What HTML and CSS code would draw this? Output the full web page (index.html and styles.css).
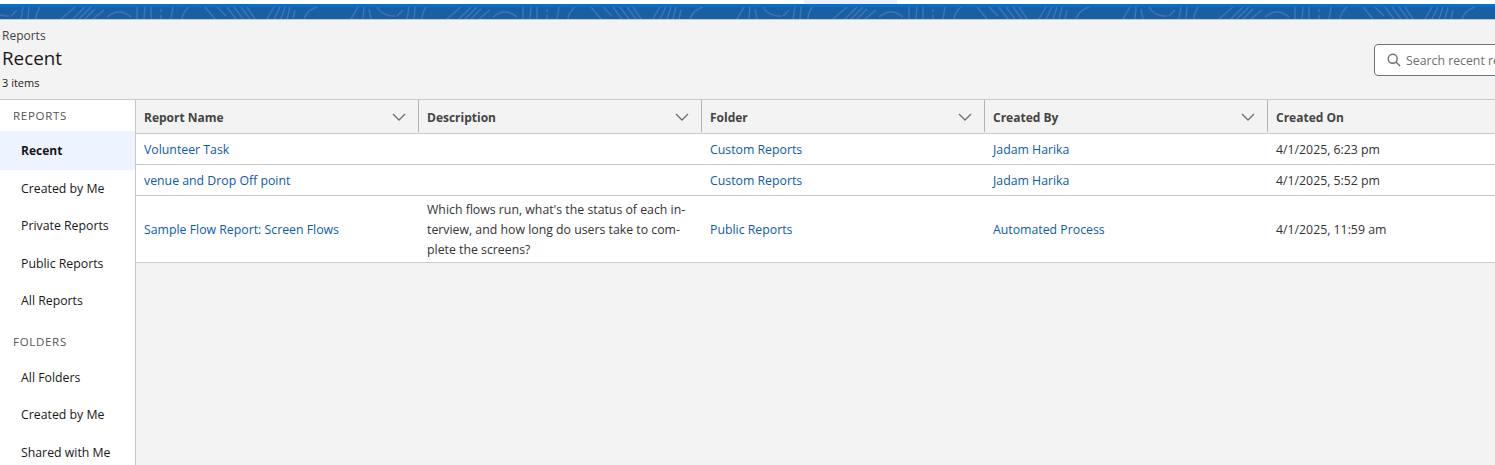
FILE: index.html
```html
<!DOCTYPE html>
<html>
<head>
    <meta charset="utf-8">
    <link rel="stylesheet" href="styles.css">
</head>
<body>
    <div class="tabs-strip">
        <div class="tab-active"></div>
    </div>
    <div class="brand-line"></div>
    <svg class="brand-band" width="100%" height="12">
        <defs>
            <pattern id="swirl" patternUnits="userSpaceOnUse" x="19" y="0" width="386" height="12">
                <g fill="none" stroke="#3f76b1" stroke-width="1.4">
                    <path d="M2 12L4 0M9 12L10 0M17 12Q17 6 21 0"/>
                    <path d="M42 12L56 0M54 12L66 0M60 12L72 0M66 12L76 2M74 12L85 3"/>
                    <path d="M88 10Q100 0 112 10"/>
                    <path d="M118 12L118 0M125 12L126 0M132 12L132 0M142 12L142 8M142 5L142 2M152 12L154 0M163 12Q164 5 170 0"/>
                    <path d="M186 0L196 12M198 0L207 9M208 0L217 12M215 0L224 12M222 0L231 12M228 0L236 12"/>
                    <path d="M248 12L255 0M255 12L261 0M262 12L266 0M268 12L271 0M274 12L276 3"/>
                    <path d="M285 12Q288 3 298 0"/>
                    <path d="M332 12L339 0M344 12L345 0M352 12L350 2M358 0Q364 10 376 9M378 9L384 3"/>
                </g>
            </pattern>
        </defs>
        <rect width="100%" height="12" fill="#1b5fa3"/>
        <rect width="100%" height="12" fill="url(#swirl)"/>
    </svg>

    <header class="page-head">
        <div class="head-titles">
            <div class="crumb">Reports</div>
            <h1 class="page-title">Recent</h1>
            <div class="item-count">3 items</div>
        </div>
        <div class="search-box">
            <svg class="search-icon" width="14" height="14" viewBox="0 0 14 14">
                <circle cx="5.7" cy="5.7" r="4.5" fill="none" stroke="#706e6b" stroke-width="1.4"/>
                <path d="M9 9L13 13" stroke="#706e6b" stroke-width="1.5" fill="none"/>
            </svg>
            <span class="search-text">Search recent reports...</span>
        </div>
    </header>

    <div class="main">
        <nav class="side">
            <div class="side-label">REPORTS</div>
            <a class="side-item current">Recent</a>
            <a class="side-item">Created by Me</a>
            <a class="side-item">Private Reports</a>
            <a class="side-item">Public Reports</a>
            <a class="side-item">All Reports</a>
            <div class="side-label folders">FOLDERS</div>
            <a class="side-item">All Folders</a>
            <a class="side-item">Created by Me</a>
            <a class="side-item">Shared with Me</a>
        </nav>

        <div class="content">
            <div class="row head-row">
                <div class="th">Report Name<svg class="chev" width="14" height="8" viewBox="0 0 14 8"><path d="M1 1L7 7L13 1"/></svg></div>
                <div class="th">Description<svg class="chev" width="14" height="8" viewBox="0 0 14 8"><path d="M1 1L7 7L13 1"/></svg></div>
                <div class="th">Folder<svg class="chev" width="14" height="8" viewBox="0 0 14 8"><path d="M1 1L7 7L13 1"/></svg></div>
                <div class="th">Created By<svg class="chev" width="14" height="8" viewBox="0 0 14 8"><path d="M1 1L7 7L13 1"/></svg></div>
                <div class="th last">Created On</div>
            </div>
            <div class="row body-row">
                <div class="td"><a>Volunteer Task</a></div>
                <div class="td"></div>
                <div class="td"><a>Custom Reports</a></div>
                <div class="td"><a>Jadam Harika</a></div>
                <div class="td">4/1/2025, 6:23 pm</div>
            </div>
            <div class="row body-row">
                <div class="td"><a>venue and Drop Off point</a></div>
                <div class="td"></div>
                <div class="td"><a>Custom Reports</a></div>
                <div class="td"><a>Jadam Harika</a></div>
                <div class="td">4/1/2025, 5:52 pm</div>
            </div>
            <div class="row body-row tall">
                <div class="td"><a>Sample Flow Report: Screen Flows</a></div>
                <div class="td desc">Which flows run, what's the status of each in-<br>terview, and how long do users take to com-<br>plete the screens?</div>
                <div class="td"><a>Public Reports</a></div>
                <div class="td"><a>Automated Process</a></div>
                <div class="td">4/1/2025, 11:59 am</div>
            </div>
        </div>
    </div>
</body>
</html>
```

FILE: styles.css
```css
html,
body {
    margin: 0;
    height: 465px;
    overflow: hidden;
    background: #f3f3f3;
    font-family: "Open Sans", "Noto Sans", sans-serif;
    font-size: 12.3px;
    color: #2e2e2e;
}

.tabs-strip {
    height: 4px;
    background: #fff;
}

.tab-active {
    width: 93px;
    height: 4px;
    margin-left: 804px;
    background: #eaf1fb;
}

.brand-line {
    height: 3px;
    background: #0070d2;
}

.brand-band {
    display: block;
    height: 12px;
    border-bottom: 1px solid #c9c9c9;
}

.page-head {
    display: flex;
    justify-content: space-between;
    height: 79px;
    border-bottom: 1px solid #c9c9c9;
}

.head-titles {
    padding: 8px 0 0 2px;
}

.crumb {
    font-size: 12px;
    line-height: 16px;
    color: #444;
}

.page-title {
    margin: 1px 0 0;
    font-size: 18.8px;
    line-height: 26px;
    font-weight: 400;
    color: #181818;
}

.item-count {
    margin-top: 4px;
    font-size: 11px;
    line-height: 16px;
    color: #222;
}

.search-box {
    display: flex;
    flex: none;
    align-items: center;
    gap: 5px;
    box-sizing: border-box;
    width: 220px;
    height: 32px;
    margin: 24px -99px 0 0;
    padding-left: 12px;
    background: #fff;
    border: 1px solid #747474;
    border-radius: 4px;
}

.search-text {
    color: #706e6b;
    white-space: nowrap;
}

.main {
    display: flex;
    height: 365px;
}

.side {
    flex: none;
    width: 135px;
    background: #fff;
    border-right: 1px solid #c9c9c9;
}

.side-label {
    height: 31px;
    padding-left: 13px;
    line-height: 31px;
    font-size: 11.5px;
    letter-spacing: 0.7px;
    color: #555;
}

.side-label.folders {
    height: 33px;
    margin-top: 6px;
    line-height: 32px;
}

.side-item {
    display: block;
    height: 37.5px;
    padding-left: 21px;
    line-height: 37px;
    color: #181818;
}

.side-item.current {
    height: 38.5px;
    line-height: 39px;
    font-size: 12px;
    font-weight: 700;
    background: #eef4ff;
}

.content {
    flex: 1;
    min-width: 0;
}

.row {
    display: grid;
    grid-template-columns: repeat(4, 283px) 1fr;
    border-bottom: 1px solid #c9c9c9;
}

.head-row {
    height: 33px;
}

.body-row {
    height: 30px;
    background: #fff;
}

.body-row.tall {
    height: 66px;
}

.th {
    display: flex;
    align-items: center;
    justify-content: space-between;
    margin: 0 0 1px;
    padding: 2px 12px 0 8px;
    font-size: 12px;
    font-weight: 700;
    color: #444;
    border-right: 1px solid #b4b4b4;
}

.th.last {
    border-right: 0;
}

.chev {
    fill: none;
    stroke: #706e6b;
    stroke-width: 1.3;
}

.td {
    display: flex;
    align-items: center;
    padding: 0 8px;
    color: #333;
}

.td a {
    color: #0b5cab;
}

.td.desc {
    display: block;
    padding-top: 4px;
    line-height: 20px;
}
```
